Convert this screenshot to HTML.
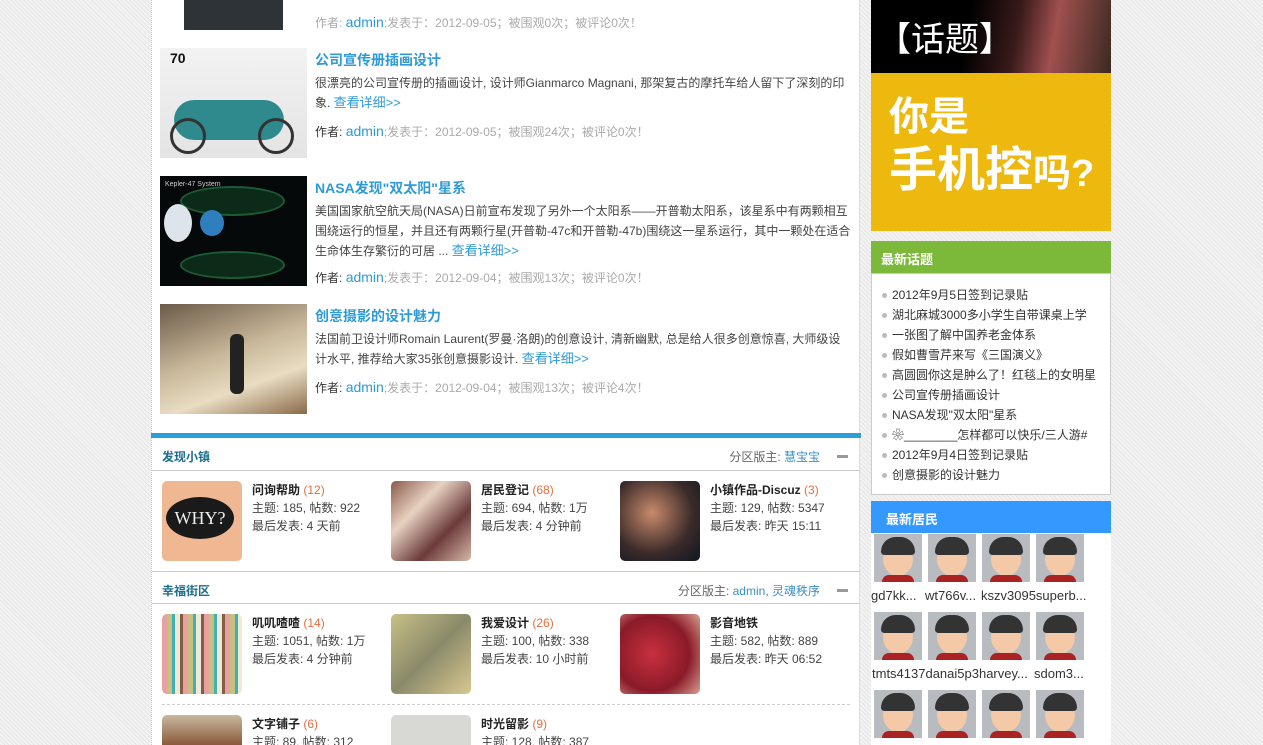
<!DOCTYPE html>
<html style="height:745px;overflow:hidden"><head><meta charset="utf-8"><style>
*{margin:0;padding:0;box-sizing:border-box}
body{width:1263px;height:745px;overflow:hidden;background:#eee;background-image:repeating-linear-gradient(45deg,#e6e6e6 0 1px,#f2f2f2 1px 3px);font-family:"Liberation Sans","Noto Sans CJK SC",sans-serif;font-size:12px;color:#333;position:relative}
.a{position:absolute}
.main{left:151px;top:0;width:709px;height:745px;background:#fff;border-left:1px dotted #ccc;border-right:1px solid #ddd}
.img{position:absolute;width:147px;height:110px;overflow:hidden}
.t{position:absolute;left:315px;font-size:14px;font-weight:bold;color:#2e9bd6}
.d{position:absolute;left:315px;width:537px;line-height:20px;font-size:12px;color:#444}
.d a{color:#2e9bd6;font-size:13px}
.m{position:absolute;left:315px;font-size:12px;color:#aaa}
.m b{font-weight:normal;color:#333}.m i{font-style:normal;color:#2e9bd6;font-size:14px}
.sec{position:absolute;left:152px;width:708px;height:33px;border-bottom:1px solid #ccc}
.sec .n{position:absolute;left:10px;top:10px;color:#1b6e8c;font-weight:bold;font-size:12px}
.sec .r{position:absolute;right:40px;top:10px;color:#666;font-size:12px}
.sec .r span{color:#3a8fc4}
.sec .mi{position:absolute;right:12px;top:17px;width:11px;height:3px;background:#999}
.f{position:absolute;width:80px;height:80px;border-radius:5px;overflow:hidden}
.fi{position:absolute;font-size:12px;line-height:18px;color:#444}
.fi b{color:#222}.fi em{font-style:normal;color:#e07040}
.side li{list-style:none;height:20px;line-height:20px;font-size:12px;color:#333;padding-left:20px;position:relative}
.side li:before{content:"";position:absolute;left:10px;top:8px;width:5px;height:5px;border-radius:50%;background:#bbb}
.av{position:absolute;width:48px;height:48px;background:#b8bcc0;overflow:hidden}
.av:before{content:"";position:absolute;left:9px;top:8px;width:30px;height:34px;border-radius:50%;background:#f3c9a8}
.av:after{content:"";position:absolute;left:7px;top:3px;width:34px;height:18px;border-radius:17px 17px 4px 4px;background:#333}
.av i{position:absolute;left:8px;bottom:0;width:32px;height:7px;background:#a22;border-radius:8px 8px 0 0}
.nm{position:absolute;font-size:13px;color:#333;white-space:nowrap}
</style></head><body>
<div class="a main"></div>
<div class="img" style="left:184px;top:0;width:99px;height:30px;background:#2d3336"></div>
<div class="m" style="top:14px">作者: <i>admin</i>;发表于：2012-09-05；被围观0次；被评论0次！</div>
<div class="img" style="left:160px;top:48px;background:linear-gradient(180deg,#f2f2f2,#e4e4e4)"><div class="a" style="left:10px;top:2px;font-weight:bold;font-size:14px;color:#111">70</div><div class="a" style="left:14px;top:52px;width:110px;height:40px;border-radius:20px;background:#2f8a8e"></div><div class="a" style="left:10px;top:70px;width:36px;height:36px;border:3px solid #333;border-radius:50%"></div><div class="a" style="left:98px;top:70px;width:36px;height:36px;border:3px solid #333;border-radius:50%"></div></div>
<div class="t" style="top:50px">公司宣传册插画设计</div>
<div class="d" style="top:73px">很漂亮的公司宣传册的插画设计, 设计师Gianmarco Magnani, 那架复古的摩托车给人留下了深刻的印象. <a>查看详细&gt;&gt;</a></div>
<div class="m" style="top:123px"><b>作者:</b> <i>admin</i>;发表于：2012-09-05；被围观24次；被评论0次！</div>
<div class="img" style="left:160px;top:176px;background:#05090a"><div class="a" style="left:5px;top:5px;color:#ccc;font-size:7px">Kepler-47 System</div><div class="a" style="left:20px;top:10px;width:105px;height:30px;border-radius:50%;border:2px solid #1c5a35;background:#0c2a18"></div><div class="a" style="left:20px;top:75px;width:105px;height:28px;border-radius:50%;border:2px solid #1c5a35;background:#0c2a18"></div><div class="a" style="left:4px;top:28px;width:28px;height:38px;border-radius:50%;background:#dde4ec"></div><div class="a" style="left:40px;top:34px;width:24px;height:26px;border-radius:50%;background:#2f7fbf"></div></div>
<div class="t" style="top:178px">NASA发现"双太阳"星系</div>
<div class="d" style="top:201px">美国国家航空航天局(NASA)日前宣布发现了另外一个太阳系——开普勒太阳系，该星系中有两颗相互围绕运行的恒星，并且还有两颗行星(开普勒-47c和开普勒-47b)围绕这一星系运行，其中一颗处在适合生命体生存繁衍的可居 ... <a>查看详细&gt;&gt;</a></div>
<div class="m" style="top:269px"><b>作者:</b> <i>admin</i>;发表于：2012-09-04；被围观13次；被评论0次！</div>
<div class="img" style="left:160px;top:304px;background:linear-gradient(160deg,#6b5a48,#c9b89a 45%,#e8dcc2 70%,#8a6a4a)"><div class="a" style="left:70px;top:30px;width:14px;height:60px;background:#222;border-radius:6px"></div></div>
<div class="t" style="top:306px">创意摄影的设计魅力</div>
<div class="d" style="top:329px">法国前卫设计师Romain Laurent(罗曼·洛朗)的创意设计, 清新幽默, 总是给人很多创意惊喜, 大师级设计水平, 推荐给大家35张创意摄影设计. <a>查看详细&gt;&gt;</a></div>
<div class="m" style="top:379px"><b>作者:</b> <i>admin</i>;发表于：2012-09-04；被围观13次；被评论4次！</div>
<div class="a" style="left:151px;top:433px;width:710px;height:5px;background:#2a9fd8"></div>
<div class="sec" style="top:438px"><div class="n">发现小镇</div><div class="r">分区版主: <span>慧宝宝</span></div><div class="mi"></div></div>
<div class="f" style="left:162px;top:481px;background:#efb892"><div class="a" style="left:4px;top:16px;width:68px;height:42px;border-radius:50%;background:#1a1a1a;color:#eee;font:18px 'Liberation Serif',serif;text-align:center;line-height:42px">WHY?</div></div>
<div class="fi" style="left:252px;top:481px"><b>问询帮助</b> <em>(12)</em><br>主题: 185, 帖数: 922<br>最后发表: 4 天前</div>
<div class="f" style="left:391px;top:481px;background:linear-gradient(135deg,#8a5a4a,#e8d2c2,#6a3a3a,#d8b8a8)"></div>
<div class="fi" style="left:481px;top:481px"><b>居民登记</b> <em>(68)</em><br>主题: 694, 帖数: 1万<br>最后发表: 4 分钟前</div>
<div class="f" style="left:620px;top:481px;background:radial-gradient(circle at 40% 40%,#c88a6a,#3a2a2a 60%,#101820)"></div>
<div class="fi" style="left:710px;top:481px"><b>小镇作品-Discuz</b> <em>(3)</em><br>主题: 129, 帖数: 5347<br>最后发表: 昨天 15:11</div>
<div class="sec" style="top:571px;border-top:1px solid #ccc"><div class="n">幸福街区</div><div class="r">分区版主: <span>admin</span>, <span>灵魂秩序</span></div><div class="mi"></div></div>
<div class="f" style="left:162px;top:614px;background:repeating-linear-gradient(90deg,#e8a0a0 0 5px,#c8c080 5px 10px,#40b0b0 10px 13px,#f0e8d8 13px 18px,#806040 18px 21px)"></div>
<div class="fi" style="left:252px;top:614px"><b>叽叽喳喳</b> <em>(14)</em><br>主题: 1051, 帖数: 1万<br>最后发表: 4 分钟前</div>
<div class="f" style="left:391px;top:614px;background:linear-gradient(135deg,#c8c088,#8a8a6a,#d8c890)"></div>
<div class="fi" style="left:481px;top:614px"><b>我爱设计</b> <em>(26)</em><br>主题: 100, 帖数: 338<br>最后发表: 10 小时前</div>
<div class="f" style="left:620px;top:614px;background:radial-gradient(circle at 40% 50%,#c83040,#8a1a28 60%,#d8a090)"></div>
<div class="fi" style="left:710px;top:614px"><b>影音地铁</b><br>主题: 582, 帖数: 889<br>最后发表: 昨天 06:52</div>
<div class="a" style="left:162px;top:704px;width:688px;border-top:1px dashed #ccc"></div>
<div class="f" style="left:162px;top:715px;height:30px;border-radius:5px 5px 0 0;background:linear-gradient(180deg,#c8b8a0,#8a5a3a)"></div>
<div class="fi" style="left:252px;top:715px;height:30px;overflow:hidden"><b>文字铺子</b> <em>(6)</em><br>主题: 89, 帖数: 312</div>
<div class="f" style="left:391px;top:715px;height:30px;border-radius:5px 5px 0 0;background:#d8d8d4"></div>
<div class="fi" style="left:481px;top:715px;height:30px;overflow:hidden"><b>时光留影</b> <em>(9)</em><br>主题: 128, 帖数: 387</div>
<div class="a" style="left:871px;top:0;width:240px;height:73px;background:linear-gradient(100deg,#000 40%,#3a1a1a 60%,#a05050 75%,#3a2a20)"><div class="a" style="left:6px;top:20px;color:#fff;font-size:34px;line-height:40px">【话题】</div></div>
<div class="a" style="left:871px;top:73px;width:240px;height:158px;background:#edb90f"><div class="a" style="left:18px;top:20px;color:#fff;font-size:40px;font-weight:bold;line-height:48px">你是</div><div class="a" style="left:18px;top:70px;color:#fff;font-size:48px;font-weight:bold;line-height:56px;white-space:nowrap">手机控<span style="font-size:38px">吗?</span></div></div>
<div class="a" style="left:871px;top:241px;width:240px;height:32px;background:#7cb83a;color:#fff;font-weight:bold;font-size:13px;padding:8px 10px">最新话题</div>
<div class="a side" style="left:871px;top:273px;width:240px;height:222px;background:#fff;border:1px solid #ccc;padding-top:11px"><ul>
<li>2012年9月5日签到记录贴</li><li>湖北麻城3000多小学生自带课桌上学</li><li>一张图了解中国养老金体系</li><li>假如曹雪芹来写《三国演义》</li><li>高圆圆你这是肿么了！红毯上的女明星</li><li>公司宣传册插画设计</li><li>NASA发现"双太阳"星系</li><li>❀________怎样都可以快乐/三人游#</li><li>2012年9月4日签到记录贴</li><li>创意摄影的设计魅力</li></ul></div>
<div class="a" style="left:871px;top:501px;width:240px;height:32px;background:#3399ff;color:#fff;font-weight:bold;font-size:13px;padding:8px 15px">最新居民</div>
<div class="a" style="left:871px;top:533px;width:240px;height:212px;background:#fff"></div>
<div class="av" style="left:874px;top:534px"><i></i></div><div class="av" style="left:928px;top:534px"><i></i></div><div class="av" style="left:982px;top:534px"><i></i></div><div class="av" style="left:1036px;top:534px"><i></i></div>
<div class="nm" style="left:871px;top:588px">gd7kk...</div><div class="nm" style="left:925px;top:588px">wt766v...</div><div class="nm" style="left:981px;top:588px">kszv3095superb...</div>
<div class="av" style="left:874px;top:612px"><i></i></div><div class="av" style="left:928px;top:612px"><i></i></div><div class="av" style="left:982px;top:612px"><i></i></div><div class="av" style="left:1036px;top:612px"><i></i></div>
<div class="nm" style="left:872px;top:666px">tmts4137danai5p3harvey...</div><div class="nm" style="left:1034px;top:666px">sdom3...</div>
<div class="av" style="left:874px;top:690px"><i></i></div><div class="av" style="left:928px;top:690px"><i></i></div><div class="av" style="left:982px;top:690px"><i></i></div><div class="av" style="left:1036px;top:690px"><i></i></div>
</body></html>
